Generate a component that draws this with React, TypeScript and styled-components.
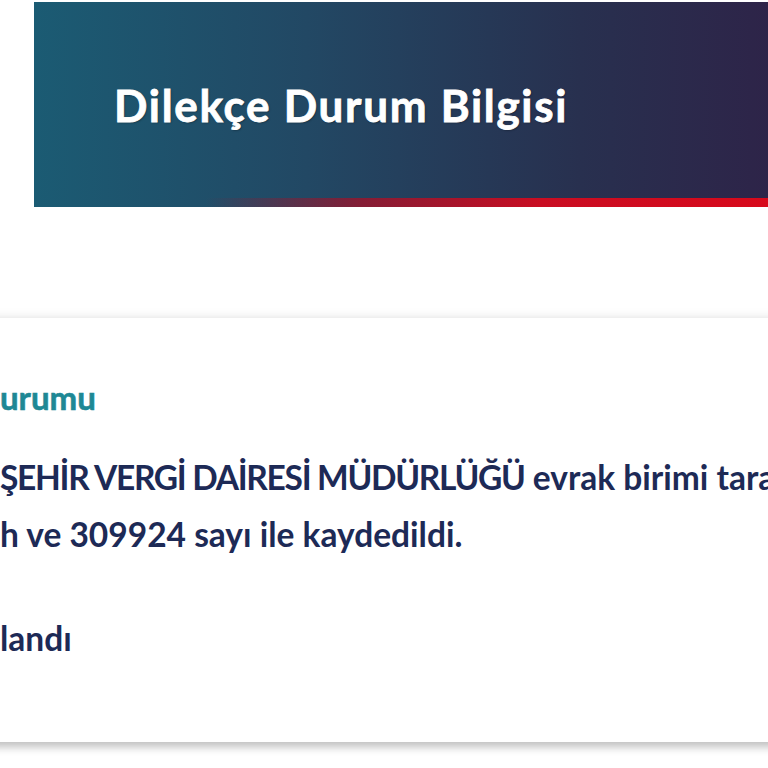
import { FC } from "react";
import styled, { createGlobalStyle } from "styled-components";

const GlobalStyle = createGlobalStyle`
  html, body {
    margin: 0;
    padding: 0;
    background: #ffffff;
    overflow: hidden;
  }
  body {
    font-family: Lato, "Noto Sans", sans-serif;
  }
`;

const App: FC = () => {
  return (
    <>
      <GlobalStyle />
      <SPage>
        <SBanner>
          <STitle>Dilekçe Durum Bilgisi</STitle>
        </SBanner>
        <SCard>
          <SHeading>urumu</SHeading>
          <SLine>
            <SCaps>ŞEHİR VERGİ DAİRESİ MÜDÜRLÜĞÜ</SCaps> evrak birimi tarafından
          </SLine>
          <SLine>h ve 309924 sayı ile kaydedildi.</SLine>
          <SStatus>landı</SStatus>
        </SCard>
      </SPage>
    </>
  );
};

export default App;

const SPage = styled.div`
  display: flex;
  flex-direction: column;
  width: 768px;
  height: 768px;
  padding-top: 2px;
  box-sizing: border-box;
  overflow: hidden;
`;

const SBanner = styled.div`
  position: relative;
  display: flex;
  align-items: center;
  margin-left: 34px;
  width: 780px;
  height: 205px;
  padding-left: 80px;
  box-sizing: border-box;
  background: linear-gradient(90deg, #1b5b73 0%, #224864 35%, #28304f 70%, #2f2147 100%);

  &::after {
    content: "";
    position: absolute;
    left: 0;
    right: 0;
    bottom: 0;
    height: 9px;
    background: linear-gradient(90deg, rgba(200, 16, 30, 0) 22%, rgba(150, 22, 45, 0.85) 42%, #c90d22 65%, #d8091b 95%);
  }
`;

const STitle = styled.h1`
  margin: 0;
  color: #ffffff;
  font-family: Lato, "Noto Sans", sans-serif;
  font-weight: 700;
  font-size: 44px;
  letter-spacing: 1.7px;
  -webkit-text-stroke: 0.8px #ffffff;
  text-shadow: 1px 1px 2px rgba(0, 0, 0, 0.35);
`;

const SCard = styled.div`
  display: flex;
  flex-direction: column;
  margin: 111px -20px 0 -20px;
  padding: 56px 20px 0 20px;
  height: 424px;
  box-sizing: border-box;
  background: #ffffff;
  box-shadow: 0 0 10px rgba(0, 0, 0, 0.12), 0 6px 8px rgba(0, 0, 0, 0.18);
  white-space: nowrap;
  overflow: hidden;
`;

const SHeading = styled.h2`
  margin: 0 0 29px 0;
  color: #1e8895;
  font-family: Lato, "Noto Sans", sans-serif;
  font-weight: 700;
  font-size: 33px;
  line-height: 46px;
  -webkit-text-stroke: 0.6px #1e8895;
`;

const SLine = styled.p`
  margin: 0;
  color: #1d2a56;
  font-family: Lato, "Noto Sans", sans-serif;
  font-weight: 700;
  font-size: 33.5px;
  line-height: 57px;
`;

const SCaps = styled.span`
  letter-spacing: -1.3px;
`;

const SStatus = styled(SLine)`
  margin-top: 47px;
`;
